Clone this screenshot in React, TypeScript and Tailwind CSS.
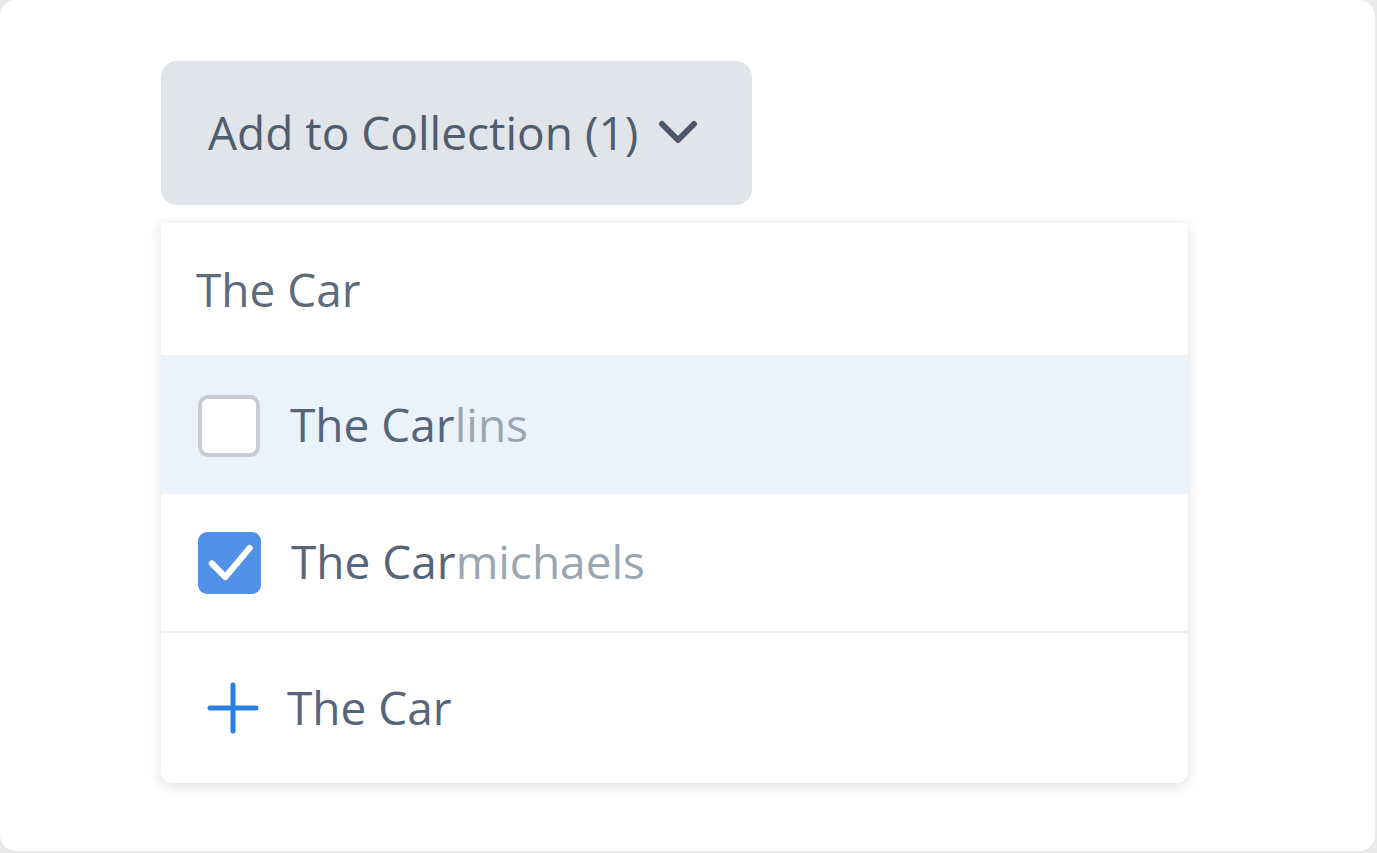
import { useState } from "react";

type Option = { id: number; name: string; checked: boolean };

const QUERY = "The Car";

function Checkbox({ checked }: { checked: boolean }) {
  if (checked) {
    return (
      <span className="flex h-[62px] w-[63px] shrink-0 items-center justify-center rounded-[9px] bg-[#5191e8]">
        <svg viewBox="0 0 24 24" className="h-[62px] w-[62px]" fill="none">
          <path
            d="M5 12.2 L10.2 17.4 L19.6 6.2"
            stroke="#ffffff"
            strokeWidth="2.4"
            strokeLinecap="round"
            strokeLinejoin="round"
          />
        </svg>
      </span>
    );
  }
  return (
    <span className="block h-[62px] w-[62px] shrink-0 rounded-[10px] border-[4px] border-[#c9cdd3] bg-white" />
  );
}

export default function App() {
  const [options, setOptions] = useState<Option[]>([
    { id: 1, name: "The Carlins", checked: false },
    { id: 2, name: "The Carmichaels", checked: true },
  ]);
  const [hovered] = useState(1);

  const toggle = (id: number) =>
    setOptions((o) => o.map((x) => (x.id === id ? { ...x, checked: !x.checked } : x)));

  const count = options.filter((o) => o.checked).length;

  return (
    <div
      className="h-[853px] w-[1377px] bg-[#e9e9e9]"
      style={{ fontFamily: '"Open Sans", "Noto Sans", sans-serif' }}
    >
      <div className="h-[851px] w-[1375px] rounded-[16px] bg-white pl-[161px] pt-[61px]">
        <button className="flex h-[144px] w-[591px] items-center gap-[20px] rounded-[16px] bg-[#e1e4e9] pl-[47px] text-[46px] leading-none text-[#4f5d6e]">
          <span className="-mt-[2px]">Add to Collection ({count})</span>
          <svg viewBox="0 0 40 26" className="h-[26px] w-[40px]" fill="none">
            <path
              d="M4 4 L20 20 L36 4"
              stroke="#4a5869"
              strokeWidth="6"
              strokeLinecap="round"
              strokeLinejoin="round"
            />
          </svg>
        </button>

        <div className="mt-[18px] w-[1027px] overflow-hidden rounded-b-[12px] bg-white shadow-[0_3px_14px_rgba(0,0,0,0.13)]">
          <div className="flex h-[134px] items-center border-b-2 border-[#eef0f2] pl-[35px] text-[46px] text-[#5e6b7b]">
            {QUERY}
          </div>

          {options.map((o) => (
            <div
              key={o.id}
              onClick={() => toggle(o.id)}
              className={[
                "flex h-[137px] cursor-pointer items-center gap-[30px] pl-[37px] text-[46px]",
                o.id === hovered ? "bg-[#eaf2fb]" : "bg-white",
              ].join(" ")}
            >
              <Checkbox checked={o.checked} />
              <span className="-mt-[2px]">
                <span className="text-[#56657a]">{o.name.slice(0, QUERY.length)}</span>
                <span className="text-[#9ba6b3]">{o.name.slice(QUERY.length)}</span>
              </span>
            </div>
          ))}

          <div className="flex h-[152px] items-center gap-[28px] border-t-2 border-[#eef0f2] pl-[46px] text-[46px] text-[#56657a]">
            <svg viewBox="0 0 52 52" className="h-[52px] w-[52px]" fill="none">
              <path d="M26 3 V49 M3 26 H49" stroke="#2a7fe0" strokeWidth="5" strokeLinecap="round" />
            </svg>
            <span className="-mt-[2px]">{QUERY}</span>
          </div>
        </div>
      </div>
    </div>
  );
}
